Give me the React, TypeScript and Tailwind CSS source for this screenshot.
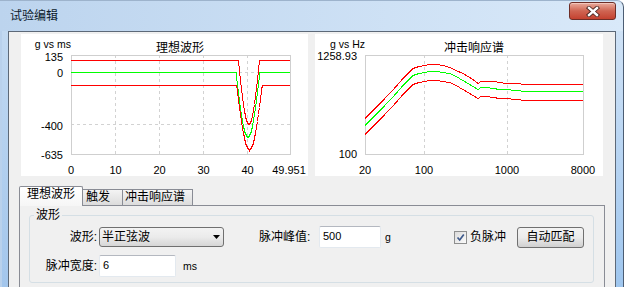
import React from "react";

// value -> local y for the ideal waveform chart (135 at top, -635 at bottom)
const wy = (v: number) => 21 + ((135 - v) * 99) / 770;

function pulse(base: number, xc: number, w: number) {
  const pts: string[] = [];
  for (let x = 50; x <= 269; x += 0.5) {
    const s = x - (xc - w / 2);
    const v = s > 0 && s < w ? base - 500 * Math.sin((Math.PI * s) / w) : base;
    pts.push(`${x},${Math.round(wy(v)) + 0.5}`);
  }
  return pts.join(" ");
}

// shock response spectrum, green curve in chart pixels
const srs: [number, number][] = [
  [50, 91], [62, 78.5], [74.7, 66], [82, 58], [88, 51], [93, 45.5], [98, 41],
  [104, 38.8], [109.7, 37.7], [115, 37], [121, 37], [128, 37.8], [134.7, 39.3],
  [141, 42.3], [148, 46], [153, 49], [158, 52], [163, 55.3], [166, 53.3],
  [172, 53.3], [178, 53.7], [185, 54.5], [191, 55.3], [200, 56], [211, 56.7], [268, 56.7],
];
const shift = (dy: number) =>
  srs.map(([x, y]) => `${x},${Math.round(y + dy) + 0.5}`).join(" ");

const axisText = "fill-black";

function WaveChart() {
  const xs = [94, 138, 182, 226];
  return (
    <div className="w-[287px] h-[142px] bg-white shrink-0">
      <svg width="287" height="142" className="block">
        <text x="50" y="14" textAnchor="end" fontSize="10.5" className={axisText}>g vs ms</text>
        <text x="159" y="18" textAnchor="middle" fontSize="12" className={axisText}>理想波形</text>
        {xs.map((x) => (
          <line key={x} x1={x + 0.5} x2={x + 0.5} y1="21" y2="120" stroke="#d2d2d2" strokeDasharray="3 3" />
        ))}
        <line x1="50" x2="269" y1="38.5" y2="38.5" stroke="#d2d2d2" strokeDasharray="3 3" />
        <line x1="50" x2="269" y1="90.5" y2="90.5" stroke="#d2d2d2" strokeDasharray="3 3" />
        <rect x="50.5" y="21.5" width="219" height="99" fill="none" stroke="#cfcfcf" shapeRendering="crispEdges" />
        <polyline points={pulse(0, 227, 23.7)} fill="none" stroke="#00ff00" strokeWidth="1" shapeRendering="crispEdges" />
        <polyline points={pulse(100, 228, 21.2)} fill="none" stroke="#ff0000" strokeWidth="1" shapeRendering="crispEdges" />
        <polyline points={pulse(-100, 228.5, 25.5)} fill="none" stroke="#ff0000" strokeWidth="1" shapeRendering="crispEdges" />
        <g fontSize="11" textAnchor="end" className={axisText}>
          <text x="42" y="26.5">135</text>
          <text x="42" y="42.5">0</text>
          <text x="42" y="95.5">-400</text>
          <text x="42" y="124.5">-635</text>
        </g>
        <g fontSize="11" textAnchor="middle" className={axisText}>
          <text x="50" y="140">0</text>
          <text x="94.5" y="140">10</text>
          <text x="138.5" y="140">20</text>
          <text x="182.5" y="140">30</text>
          <text x="226.5" y="140">40</text>
          <text x="268" y="140">49.951</text>
        </g>
      </svg>
    </div>
  );
}

function SrsChart() {
  return (
    <div className="w-[288px] h-[142px] bg-white shrink-0">
      <svg width="288" height="142" className="block">
        <text x="50" y="14" textAnchor="end" fontSize="10.5" className={axisText}>g vs Hz</text>
        <text x="159" y="18" textAnchor="middle" fontSize="12" className={axisText}>冲击响应谱</text>
        <line x1="109.5" x2="109.5" y1="21" y2="120" stroke="#d2d2d2" strokeDasharray="3 3" />
        <line x1="192.5" x2="192.5" y1="21" y2="120" stroke="#d2d2d2" strokeDasharray="3 3" />
        <rect x="50.5" y="21.5" width="218" height="99" fill="none" stroke="#cfcfcf" shapeRendering="crispEdges" />
        <polyline points={shift(-6.7)} fill="none" stroke="#ff0000" shapeRendering="crispEdges" />
        <polyline points={shift(0)} fill="none" stroke="#00ff00" shapeRendering="crispEdges" />
        <polyline points={shift(9)} fill="none" stroke="#ff0000" shapeRendering="crispEdges" />
        <g fontSize="11" textAnchor="end" className={axisText}>
          <text x="42" y="25.5">1258.93</text>
          <text x="42" y="124">100</text>
        </g>
        <g fontSize="11" textAnchor="middle" className={axisText}>
          <text x="50" y="139.5">20</text>
          <text x="109" y="139.5">100</text>
          <text x="192" y="139.5">1000</text>
          <text x="268" y="139.5">8000</text>
        </g>
      </svg>
    </div>
  );
}

function TextBox({ value, w }: { value: string; w: string }) {
  return (
    <div
      className={`${w} h-[22px] bg-white border border-[#e3e9ef] border-t-[#b4b8c0] rounded-[2px] pl-[3px] pt-[2px] text-[11px] leading-[14px] shrink-0`}
    >
      {value}
    </div>
  );
}

export default function App() {
  return (
    <div className="w-[626px] h-[287px] overflow-hidden bg-white text-[12px] text-black font-[family-name:Liberation_Sans,Noto_Sans_CJK_SC,sans-serif]">
      <div className="w-[624px] h-[287px] flex flex-col rounded-tr-[7px] border-t border-r border-t-[#9db3cc] border-r-[#4c5d73] bg-gradient-to-r from-[#bcd4ee] to-[#d9e9f9]">
        {/* title bar */}
        <div className="h-[30px] flex items-start shrink-0">
          <div className="pl-[10px] pt-[8px] leading-[14px] text-[#0b1a2b]">试验编辑</div>
          <button className="ml-auto mr-[7px] mt-[1px] w-[47px] h-[18px] flex items-center justify-center rounded-[3px] border border-[#6e2e27] bg-gradient-to-b from-[#e9ab9d] via-[#cf6452] to-[#c4412f] shadow-[inset_0_1px_0_#f3c6bc]">
            <svg width="14" height="11" viewBox="0 0 14 11">
              <path d="M3 2 L11 9 M11 2 L3 9" stroke="#4a2520" strokeWidth="4.2" strokeLinecap="square" />
              <path d="M3 2 L11 9 M11 2 L3 9" stroke="#ffffff" strokeWidth="2.4" strokeLinecap="square" />
            </svg>
          </button>
        </div>

        <div className="flex-1 flex min-h-0">
          <div className="w-[8px] shrink-0 bg-gradient-to-b from-[#c2d9f1] to-[#a3c6ec] border-l-2 border-l-[#b9d1ec]" />

          {/* client area */}
          <div className="w-[608px] shrink-0 bg-[#f0f0f0] border-l border-t border-r border-[#5d6978]">
            <div className="flex gap-[7px] pl-[12px] pt-[2px]">
              <WaveChart />
              <SrsChart />
            </div>

            {/* tab control */}
            <div className="ml-[10px] mt-[10px] w-[586px]">
              <div className="flex items-end h-[19px]">
                <div className="relative z-10 -mb-px h-[20px] w-[64px] bg-gradient-to-b from-white to-[#f6f6f6] border border-b-0 border-[#898c95] rounded-t-[2px] pl-[7px] leading-[15px]">
                  理想波形
                </div>
                <div className="h-[16px] w-[40px] border-t border-r border-[#898c95] bg-gradient-to-b from-[#f4f4f4] to-[#dcdcdc] pl-[3px] leading-[14px]">
                  触发
                </div>
                <div className="h-[16px] w-[70px] border-t border-r border-[#898c95] bg-gradient-to-b from-[#f4f4f4] to-[#dcdcdc] pl-[2px] leading-[14px]">
                  冲击响应谱
                </div>
              </div>

              <div className="h-[90px] border border-[#898c95] bg-[#f0f0f0]">
                <fieldset className="ml-[9px] mt-[2px] w-[565px] border border-[#d5dfe5] rounded-[3px]">
                  <legend className="ml-[4px] px-[2px] leading-[14px]">波形</legend>
                  <div className="flex flex-col gap-[7px] pt-[4px] pb-[5px]">
                    <div className="flex items-center h-[22px]">
                      <div className="w-[67px] text-right shrink-0 leading-[14px]">波形:</div>
                      <div className="ml-[2px] w-[125px] h-[20px] shrink-0 flex items-center border border-[#707070] rounded-[3px] bg-gradient-to-b from-[#f3f3f3] via-[#ebebeb] to-[#d6d6d6] pl-[2px] pr-[3px]">
                        <span className="leading-[14px]">半正弦波</span>
                        <svg width="7" height="4" viewBox="0 0 7 4" className="ml-auto">
                          <path d="M0 0 H7 L3.5 4 Z" fill="#000" />
                        </svg>
                      </div>
                      <div className="ml-[35px] w-[51px] shrink-0 whitespace-nowrap leading-[14px]">脉冲峰值:</div>
                      <div className="ml-[9px]">
                        <TextBox value="500" w="w-[62px]" />
                      </div>
                      <div className="ml-[4px] text-[10.5px] leading-[12px]">g</div>
                      <div className="ml-auto flex items-center">
                        <div className="w-[13px] h-[13px] border border-[#8e8f8f] bg-gradient-to-br from-[#dcdcdc] to-[#fbfbfb] flex items-center justify-center">
                          <svg width="9" height="9" viewBox="0 0 9 9">
                            <path d="M1.5 4.5 L3.7 7 L7.8 1.5" fill="none" stroke="#3e5a8c" strokeWidth="1.7" />
                          </svg>
                        </div>
                        <div className="ml-[3px] leading-[14px]">负脉冲</div>
                      </div>
                      <button className="ml-[11px] mr-[9px] w-[67px] h-[21px] shrink-0 border border-[#707070] rounded-[3px] bg-gradient-to-b from-[#f3f3f3] via-[#ebebeb] to-[#d0d0d0] leading-[14px]">
                        自动匹配
                      </button>
                    </div>

                    <div className="flex items-center h-[22px]">
                      <div className="w-[67px] text-right shrink-0 leading-[14px]">脉冲宽度:</div>
                      <div className="ml-[2px]">
                        <TextBox value="6" w="w-[77px]" />
                      </div>
                      <div className="ml-[7px] text-[10.5px] leading-[12px]">ms</div>
                    </div>
                  </div>
                </fieldset>
              </div>
            </div>
          </div>

          <div className="w-[7px] shrink-0 bg-gradient-to-b from-[#cfe2f6] to-[#9fc6ee]" />
        </div>
      </div>
    </div>
  );
}
